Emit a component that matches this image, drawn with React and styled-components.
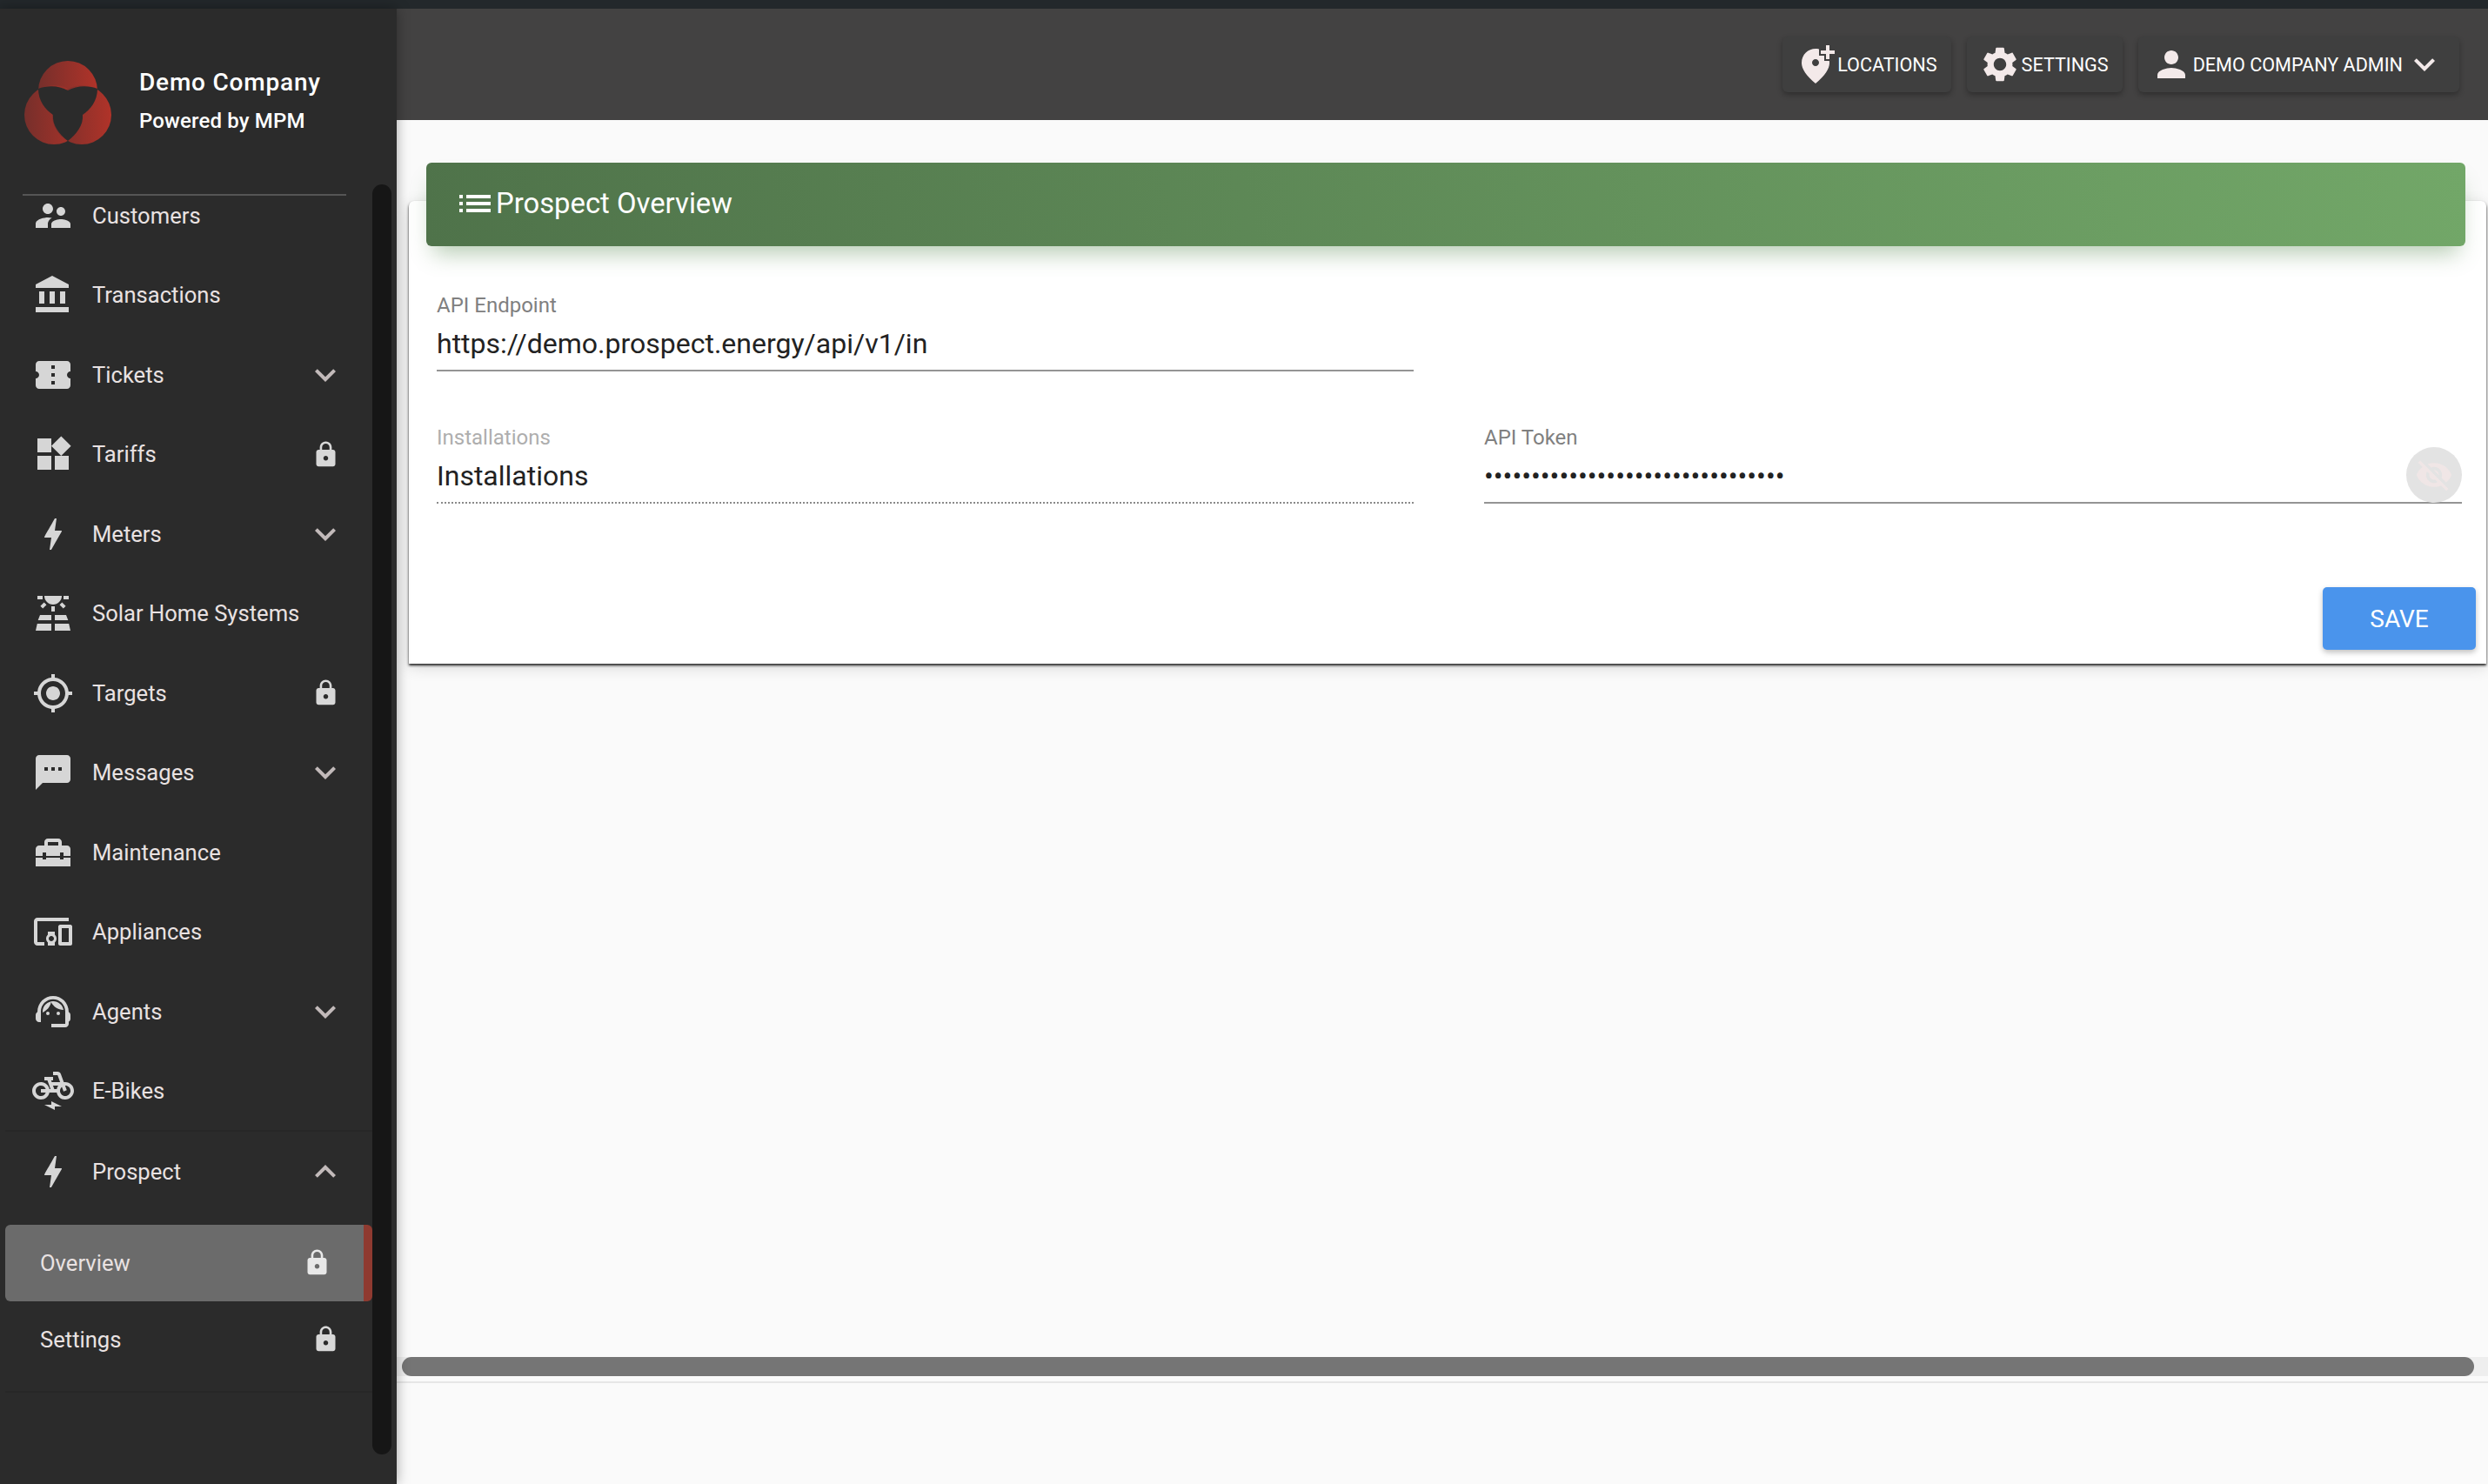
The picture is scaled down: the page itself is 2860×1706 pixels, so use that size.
import React from 'react'
import styled, { createGlobalStyle } from 'styled-components'

const Global = createGlobalStyle`
  html, body {
    margin: 0;
    padding: 0;
    height: 100%;
    overflow: hidden;
    background: #fafafa;
    font-family: Roboto, "Liberation Sans", sans-serif;
  }
`

const Page = styled.div`
  width: 2860px;
  height: 1706px;
  display: flex;
  flex-direction: column;
`
const TopStrip = styled.div`
  height: 10px;
  flex: none;
  background: #23282b;
`
const Body = styled.div`
  flex: 1;
  display: flex;
  min-height: 0;
`
const Sidebar = styled.aside`
  width: 456px;
  flex: none;
  display: flex;
  background: #2b2b2b;
  box-shadow: 0 0 14px rgba(0, 0, 0, 0.35);
  position: relative;
  z-index: 2;
`
const SideColumn = styled.div`
  width: 428px;
  flex: none;
`
const Track = styled.div`
  width: 22px;
  height: 1460px;
  margin-top: 202px;
  border-radius: 11px;
  background: #161616;
`
const Brand = styled.div`
  height: 215px;
  margin: 0 30px 0 26px;
  padding: 60px 0 0 2px;
  box-sizing: border-box;
  display: flex;
  align-items: flex-start;
  gap: 32px;
  border-bottom: 2px solid #555555;
`
const LogoMark = styled.svg`
  flex: none;
`
const BrandText = styled.div`
  color: #ffffff;
  font-weight: 500;
  padding-top: 6px;
`
const BrandName = styled.div`
  font-size: 28px;
  line-height: 38px;
  letter-spacing: 0.8px;
`
const BrandSub = styled.div`
  font-size: 24px;
  line-height: 34px;
  margin-top: 8px;
  letter-spacing: 0.15px;
`
const NavList = styled.nav`
  margin-top: -23px;
  margin-left: 6px;
`
const NavRow = styled.div`
  height: 91.5px;
  box-sizing: border-box;
  padding: 0 30px 0 31px;
  display: flex;
  align-items: center;
  gap: 21px;
  color: #e9e2e2;
  font-size: 25.6px;
`
const NavLabel = styled.span`
  flex: 1;
`
const Group = styled.div`
  border-top: 2px solid #272727;
  border-bottom: 2px solid #272727;
  margin-top: -1px;
  padding-bottom: 15px;
`
const SubList = styled.div`
  padding-top: 15px;
`
const SubRow = styled.div`
  height: 88px;
  box-sizing: border-box;
  padding: 0 30px 0 40px;
  display: flex;
  align-items: center;
  color: #e9e2e2;
  font-size: 25.6px;
  border-radius: 6px;
  background: ${p => (p.$active ? '#6b6b6b' : 'transparent')};
  border-right: ${p => (p.$active ? '10px solid #8f3a30' : 'none')};
`
const Slot = styled.span`
  width: 48px;
  height: 48px;
  flex: none;
  display: flex;
  align-items: center;
  justify-content: center;
`
const Icon = styled.svg`
  width: ${p => p.$size || 48}px;
  height: ${p => p.$size || 48}px;
  flex: none;
  fill: ${p => p.$color || '#d6d6d6'};
`

const Main = styled.main`
  flex: 1;
  min-width: 0;
  display: flex;
  flex-direction: column;
`
const Header = styled.header`
  height: 128px;
  flex: none;
  background: #434242;
  display: flex;
  justify-content: flex-end;
  align-items: flex-start;
  gap: 18px;
  padding: 32px 33px 0 0;
  box-sizing: border-box;
`
const HeaderButton = styled.div`
  height: 64px;
  box-sizing: border-box;
  padding: 0 16px 0 14px;
  display: flex;
  align-items: center;
  gap: 1px;
  background: #3f3f3f;
  border-radius: 6px;
  box-shadow: 0 3px 6px rgba(0, 0, 0, 0.3);
  color: #ffffff;
  font-size: 21.6px;
  text-transform: uppercase;
`
const Content = styled.div`
  flex: 1;
  min-height: 0;
  padding: 93px 2px 0 14px;
`
const Card = styled.section`
  height: 532px;
  box-sizing: border-box;
  background: #ffffff;
  border-radius: 6px 6px 0 0;
  box-shadow: 0 2px 3px rgba(0, 0, 0, 0.85), 0 4px 18px rgba(0, 0, 0, 0.14);
`
const CardHeader = styled.div`
  position: relative;
  top: -44px;
  height: 96px;
  margin: 0 24px -44px 20px;
  padding: 0 0 2px 32px;
  box-sizing: border-box;
  display: flex;
  align-items: center;
  border-radius: 6px;
  background: linear-gradient(80deg, #4f734a, #72a768);
  box-shadow: 0 16px 26px -8px rgba(92, 140, 84, 0.45);
  color: #ffffff;
  font-size: 32.8px;
`
const FormBody = styled.div`
  padding: 53px 28px 0 32px;
`
const FormGrid = styled.div`
  display: grid;
  grid-template-columns: 1123px 1124px;
  column-gap: 81px;
  row-gap: 61px;
`
const Field = styled.div`
  position: relative;
  height: 91px;
  box-sizing: border-box;
  border-bottom: 2px ${p => (p.$disabled ? 'dotted #8a8a8a' : 'solid #949494')};
`
const FieldLabel = styled.div`
  font-size: 24px;
  line-height: 30px;
  color: ${p => (p.$disabled ? '#aeaeae' : '#808080')};
`
const FieldValue = styled.div`
  font-size: 32px;
  line-height: 50px;
  margin-top: 4px;
  color: #222222;
`
const EyeButton = styled.div`
  position: absolute;
  right: 0;
  bottom: -1px;
  width: 64px;
  height: 64px;
  border-radius: 50%;
  background: #e3e3e3;
  display: flex;
  align-items: center;
  justify-content: center;
`
const Footer = styled.div`
  display: flex;
  justify-content: flex-end;
  margin: 96px -16px 0 0;
`
const SaveButton = styled.button`
  width: 176px;
  height: 72px;
  border: none;
  border-radius: 5px;
  background: #4a94ec;
  color: #ffffff;
  font-family: inherit;
  font-size: 28px;
  text-transform: uppercase;
  box-shadow: 0 3px 6px rgba(0, 0, 0, 0.25);
`
const ScrollTrack = styled.div`
  height: 22px;
  flex: none;
  padding-left: 6px;
  background: #eeeeee;
`
const ScrollThumb = styled.div`
  width: 2382px;
  height: 22px;
  border-radius: 11px;
  background: #757575;
`
const ScrollRule = styled.div`
  height: 2px;
  flex: none;
  margin: 6px 0 116px;
  background: #e6e6e6;
`

const P = {
  people: 'M16.5 12c1.38 0 2.49-1.12 2.49-2.5S17.88 7 16.5 7C15.12 7 14 8.12 14 9.5s1.12 2.5 2.5 2.5zM9 11c1.66 0 2.99-1.34 2.99-3S10.66 5 9 5C7.34 5 6 6.34 6 8s1.34 3 3 3zm7.5 3c-1.83 0-5.5.92-5.5 2.75V19h11v-2.25c0-1.83-3.67-2.75-5.5-2.75zM9 13c-2.33 0-7 1.17-7 3.5V19h7v-2.25c0-.85.33-2.34 2.37-3.47C10.5 13.1 9.66 13 9 13z',
  bank: 'M4 10v7h3v-7H4zm6 0v7h3v-7h-3zM2 22h19v-3H2v3zm14-12v7h3v-7h-3zm-4.5-9L2 6v2h19V6l-9.5-5z',
  ticket: 'M22 10V6c0-1.11-.9-2-2-2H4c-1.1 0-1.99.89-1.99 2v4c1.1 0 1.99.9 1.99 2s-.89 2-2 2v4c0 1.1.9 2 2 2h16c1.1 0 2-.9 2-2v-4c-1.1 0-2-.9-2-2s.9-2 2-2zm-9 7.5h-2v-2h2v2zm0-4.5h-2v-2h2v2zm0-4.5h-2v-2h2v2z',
  widgets: 'M13 13v8h8v-8h-8zM3 21h8v-8H3v8zM3 3v8h8V3H3zm13.66-1.31L11 7.34 16.66 13l5.65-5.66-5.65-5.65z',
  bolt: 'M11 21h-1l1-7H7.5c-.58 0-.57-.32-.38-.66.19-.34.05-.08.07-.12C8.48 10.94 10.42 7.54 13 3h1l-1 7h3.5c.49 0 .56.33.47.51l-.07.15C12.96 17.55 11 21 11 21z',
  solar: 'M3.33 16H11v-3H4.5L3.33 16zM13 16h7.67L19.5 13H13V16zM21.11 18H13v4h9L21.11 18zM2 22h9v-4H2.89L2 22zM11 8h2v3h-2V8zM15.76 7.16l1.41-1.41 2.12 2.12-1.41 1.41zM4.71 7.87l2.12-2.12 1.41 1.41-2.12 2.12zM3 2h3v2H3zM18 2h3v2h-3zM12 7c2.76 0 5-2.24 5-5H7c0 2.76 2.24 5 5 5z',
  gps: 'M12 8c-2.21 0-4 1.79-4 4s1.79 4 4 4 4-1.79 4-4-1.79-4-4-4zm8.94 3c-.46-4.17-3.77-7.48-7.94-7.94V1h-2v2.06C6.83 3.52 3.52 6.83 3.06 11H1v2h2.06c.46 4.17 3.77 7.48 7.94 7.94V23h2v-2.06c4.17-.46 7.48-3.77 7.94-7.94H23v-2h-2.06zM12 19c-3.87 0-7-3.13-7-7s3.13-7 7-7 7 3.13 7 7-3.13 7-7 7z',
  sms: 'M20 2H4c-1.1 0-1.99.9-1.99 2L2 22l4-4h14c1.1 0 2-.9 2-2V4c0-1.1-.9-2-2-2zM9 11H7V9h2v2zm4 0h-2V9h2v2zm4 0h-2V9h2v2z',
  repair: 'M18 16h-2v-1H8v1H6v-1H2v5h20v-5h-4zm2-8h-3V6c0-1.1-.9-2-2-2H9c-1.1 0-2 .9-2 2v2H4c-1.1 0-2 .9-2 2v4h4v-2h2v2h8v-2h2v2h4v-4c0-1.1-.9-2-2-2zm-5 0H9V6h6v2z',
  devices: 'M3 6h18V4H3c-1.1 0-2 .9-2 2v12c0 1.1.9 2 2 2h4v-2H3V6zm10 6H9v1.78c-.61.55-1 1.33-1 2.22s.39 1.67 1 2.22V20h4v-1.78c.61-.55 1-1.34 1-2.22s-.39-1.67-1-2.22V12zm-2 5.5c-.83 0-1.5-.67-1.5-1.5s.67-1.5 1.5-1.5 1.5.67 1.5 1.5-.67 1.5-1.5 1.5zM22 8h-6c-.5 0-1 .5-1 1v10c0 .5.5 1 1 1h6c.5 0 1-.5 1-1V9c0-.5-.5-1-1-1zm-1 10h-4v-8h4v8z',
  agent: 'M21 12.22C21 6.73 16.74 3 12 3c-4.69 0-9 3.65-9 9.28-.6.34-1 .98-1 1.72v2c0 1.1.9 2 2 2h1v-6.1c0-3.87 3.13-7 7-7s7 3.13 7 7V19h-8v2h8c1.1 0 2-.9 2-2v-1.22c.59-.31 1-.92 1-1.62v-2.3c0-.7-.41-1.31-1-1.64zM10 13a1 1 0 1 1-2 0 1 1 0 0 1 2 0zm6 0a1 1 0 1 1-2 0 1 1 0 0 1 2 0zM18 11.03C17.52 8.18 15.04 6 12.05 6c-3.03 0-6.29 2.51-6.03 6.45 2.47-1.01 4.33-3.21 4.86-5.89 1.31 2.63 4 4.44 7.12 4.47z',
  ebike: 'M19 7h-.82l-1.7-4.68C16.19 1.53 15.44 1 14.6 1H12v2h2.6l1.46 4h-4.81l-.36-1H12V4H7v2h1.75l1.82 5H9.9C9.46 8.77 7.59 7.12 5.25 7.01 2.45 6.87 0 9.2 0 12c0 2.8 2.2 5 5 5 2.46 0 4.45-1.69 4.9-4h4.2c.44 2.34 2.31 3.99 4.65 4 2.8.14 5.25-2.19 5.25-5 0-2.8-2.2-5-5-5zM7.82 13c-.4 1.17-1.49 2-2.82 2-1.68 0-3-1.32-3-3s1.32-3 3-3c1.33 0 2.42.83 2.82 2H5v2h2.82zm6.28-2h-1.4l-.73-2H15c-.44.58-.76 1.25-.9 2zm4.9 4c-1.68 0-3-1.32-3-3 0-.93.41-1.73 1.05-2.28l.96 2.64 1.88-.68-.97-2.67c.03 0 .06-.01.09-.01 1.68 0 3 1.32 3 3s-1.33 3-3.01 3zM11 20H7l6 3v-2h4l-6-3z',
  lock: 'M18 8h-1V6c0-2.76-2.24-5-5-5S7 3.24 7 6v2H6c-1.1 0-2 .9-2 2v10c0 1.1.9 2 2 2h12c1.1 0 2-.9 2-2V10c0-1.1-.9-2-2-2zm-6 9c-1.1 0-2-.9-2-2s.9-2 2-2 2 .9 2 2-.9 2-2 2zm3.1-9H8.9V6c0-1.71 1.39-3.1 3.1-3.1 1.71 0 3.1 1.39 3.1 3.1v2z',
  down: 'M16.59 8.59L12 13.17 7.41 8.59 6 10l6 6 6-6z',
  up: 'M12 8l-6 6 1.41 1.41L12 10.83l4.59 4.58L18 14z',
  addLocation: 'M20 1v3h3v2h-3v3h-2V6h-3V4h3V1h2zm-8 12c1.1 0 2-.9 2-2s-.9-2-2-2-2 .9-2 2 .9 2 2 2zm2-9.75V7h3v3h2.92c.05.39.08.79.08 1.2 0 3.32-2.67 7.25-8 11.8-5.33-4.55-8-8.48-8-11.8C4 6.22 7.8 3 12 3c.68 0 1.35.08 2 .25z',
  gear: 'M19.14 12.94c.04-.3.06-.61.06-.94 0-.32-.02-.64-.07-.94l2.03-1.58c.18-.14.23-.41.12-.61l-1.92-3.32c-.12-.22-.37-.29-.59-.22l-2.39.96c-.5-.38-1.03-.7-1.62-.94l-.36-2.54c-.04-.24-.24-.41-.48-.41h-3.84c-.24 0-.43.17-.47.41l-.36 2.54c-.59.24-1.13.57-1.62.94l-2.39-.96c-.22-.08-.47 0-.59.22L2.74 8.87c-.12.21-.08.47.12.61l2.03 1.58c-.05.3-.09.63-.09.94s.02.64.07.94l-2.03 1.58c-.18.14-.23.41-.12.61l1.92 3.32c.12.22.37.29.59.22l2.39-.96c.5.38 1.03.7 1.62.94l.36 2.54c.05.24.24.41.48.41h3.84c.24 0 .44-.17.47-.41l.36-2.54c.59-.24 1.13-.56 1.62-.94l2.39.96c.22.08.47 0 .59-.22l1.92-3.32c.12-.22.07-.47-.12-.61l-2.01-1.58zM12 15.6c-1.98 0-3.6-1.62-3.6-3.6s1.62-3.6 3.6-3.6 3.6 1.62 3.6 3.6-1.62 3.6-3.6 3.6z',
  person: 'M12 12c2.21 0 4-1.79 4-4s-1.79-4-4-4-4 1.79-4 4 1.79 4 4 4zm0 2c-2.67 0-8 1.34-8 4v2h16v-2c0-2.66-5.33-4-8-4z',
  list: 'M3 13h2v-2H3v2zm0 4h2v-2H3v2zm0-8h2V7H3v2zm4 4h14v-2H7v2zm0 4h14v-2H7v2zM7 7v2h14V7H7z',
  eyeOff: 'M12 7c2.76 0 5 2.24 5 5 0 .65-.13 1.26-.36 1.83l2.92 2.92c1.51-1.26 2.7-2.89 3.43-4.75-1.73-4.39-6-7.5-11-7.5-1.4 0-2.74.25-3.98.7l2.16 2.16C10.74 7.13 11.35 7 12 7zM2 4.27l2.28 2.28.46.46C3.08 8.3 1.78 10.02 1 12c1.73 4.39 6 7.5 11 7.5 1.55 0 3.03-.3 4.38-.84l.42.42L19.73 22 21 20.73 3.27 3 2 4.27zM7.53 9.8l1.55 1.55c-.05.21-.08.43-.08.65 0 1.66 1.34 3 3 3 .22 0 .44-.03.65-.08l1.55 1.55c-.67.33-1.41.53-2.2.53-2.76 0-5-2.24-5-5 0-.79.2-1.53.53-2.2zm4.31-.78l3.15 3.15.02-.16c0-1.66-1.34-3-3-3l-.17.01z',
}

const Glyph = ({ d, size, color }) => (
  <Icon viewBox="0 0 24 24" $size={size} $color={color}>
    <path d={d} />
  </Icon>
)

const Logo = () => (
  <LogoMark width="100" height="96" viewBox="0 0 100 96">
    <defs>
      <linearGradient id="lobe" x1="0" x2="1" y1="0" y2="0">
        <stop offset="0" stopColor="#762f2b" />
        <stop offset="1" stopColor="#b03329" />
      </linearGradient>
    </defs>
    <circle cx="50" cy="34" r="34" fill="url(#lobe)" />
    <circle cx="34" cy="62" r="34" fill="url(#lobe)" />
    <circle cx="66" cy="62" r="34" fill="url(#lobe)" />
    <path
      d="M16 32 C26 28 40 28 50 34 C60 28 74 28 84 32 C84 46 76 56 67 62 C68 74 60 84 50 92 C40 84 32 74 33 62 C24 56 16 46 16 32Z"
      fill="#2b2b2b"
    />
  </LogoMark>
)

const menu = [
  { label: 'Customers', icon: P.people },
  { label: 'Transactions', icon: P.bank },
  { label: 'Tickets', icon: P.ticket, end: 'down' },
  { label: 'Tariffs', icon: P.widgets, end: 'lock' },
  { label: 'Meters', icon: P.bolt, end: 'down' },
  { label: 'Solar Home Systems', icon: P.solar },
  { label: 'Targets', icon: P.gps, end: 'lock' },
  { label: 'Messages', icon: P.sms, end: 'down' },
  { label: 'Maintenance', icon: P.repair },
  { label: 'Appliances', icon: P.devices },
  { label: 'Agents', icon: P.agent, end: 'down' },
  { label: 'E-Bikes', icon: P.ebike },
]

const RowEnd = ({ kind, color }) => {
  if (kind === 'lock') return <Slot><Glyph d={P.lock} size={33} color={color || '#d8d8d8'} /></Slot>
  if (kind === 'down') return <Slot><Glyph d={P.down} color="#c2baba" /></Slot>
  if (kind === 'up') return <Slot><Glyph d={P.up} color="#c2baba" /></Slot>
  return null
}

export default function App() {
  return (
    <>
      <Global />
      <Page>
        <TopStrip />
        <Body>
          <Sidebar>
            <SideColumn>
              <Brand>
                <Logo />
                <BrandText>
                  <BrandName>Demo Company</BrandName>
                  <BrandSub>Powered by MPM</BrandSub>
                </BrandText>
              </Brand>
              <NavList>
                {menu.map(item => (
                  <NavRow key={item.label}>
                    <Glyph d={item.icon} />
                    <NavLabel>{item.label}</NavLabel>
                    <RowEnd kind={item.end} />
                  </NavRow>
                ))}
                <Group>
                  <NavRow>
                    <Glyph d={P.bolt} />
                    <NavLabel>Prospect</NavLabel>
                    <RowEnd kind="up" />
                  </NavRow>
                  <SubList>
                    <SubRow $active>
                      <NavLabel>Overview</NavLabel>
                      <RowEnd kind="lock" color="#e8e8e8" />
                    </SubRow>
                    <SubRow>
                      <NavLabel>Settings</NavLabel>
                      <RowEnd kind="lock" />
                    </SubRow>
                  </SubList>
                </Group>
              </NavList>
            </SideColumn>
            <Track />
          </Sidebar>
          <Main>
            <Header>
              <HeaderButton>
                <Glyph d={P.addLocation} color="#f3e9e9" />
                <span>Locations</span>
              </HeaderButton>
              <HeaderButton>
                <Glyph d={P.gear} color="#f3e9e9" />
                <span>Settings</span>
              </HeaderButton>
              <HeaderButton>
                <Glyph d={P.person} color="#f3e9e9" />
                <span>Demo Company Admin</span>
                <Glyph d={P.down} color="#f3e9e9" />
              </HeaderButton>
            </Header>
            <Content>
              <Card>
                <CardHeader>
                  <Glyph d={P.list} color="#ffffff" />
                  <span>Prospect Overview</span>
                </CardHeader>
                <FormBody>
                  <FormGrid>
                    <Field>
                      <FieldLabel>API Endpoint</FieldLabel>
                      <FieldValue>https://demo.prospect.energy/api/v1/in</FieldValue>
                    </Field>
                    <div />
                    <Field $disabled>
                      <FieldLabel $disabled>Installations</FieldLabel>
                      <FieldValue>Installations</FieldValue>
                    </Field>
                    <Field>
                      <FieldLabel>API Token</FieldLabel>
                      <FieldValue>{'•'.repeat(32)}</FieldValue>
                      <EyeButton>
                        <Glyph d={P.eyeOff} size={44} color="#f0e6e6" />
                      </EyeButton>
                    </Field>
                  </FormGrid>
                  <Footer>
                    <SaveButton>Save</SaveButton>
                  </Footer>
                </FormBody>
              </Card>
            </Content>
            <ScrollTrack>
              <ScrollThumb />
            </ScrollTrack>
            <ScrollRule />
          </Main>
        </Body>
      </Page>
    </>
  )
}
